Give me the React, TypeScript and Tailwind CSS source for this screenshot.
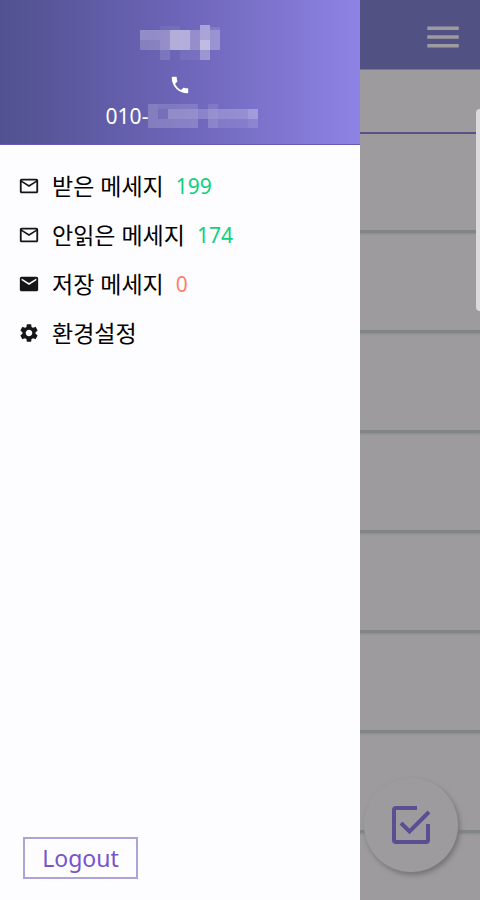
import React from "react";
import { MdMailOutline, MdEmail, MdSettings, MdPhone, MdMenu } from "react-icons/md";

interface MenuItem {
  label: string;
  icon: React.ReactNode;
  count?: number;
  countClass?: string;
}

const menuItems: MenuItem[] = [
  { label: "받은 메세지", icon: <MdMailOutline />, count: 199, countClass: "text-[#10d080]" },
  { label: "안읽은 메세지", icon: <MdMailOutline />, count: 174, countClass: "text-[#10d080]" },
  { label: "저장 메세지", icon: <MdEmail />, count: 0, countClass: "text-[#fa8268]" },
  { label: "환경설정", icon: <MdSettings /> },
];

const rows = [1, 2, 3, 4, 5, 6, 7];

// [x, y, width, height, opacity]
const nameBlocks = [
  [0, 5, 20, 10, 0.28],
  [0, 15, 20, 10, 0.2],
  [20, 1, 20, 4, 0.06],
  [20, 5, 10, 20, 0.28],
  [30, 5, 20, 20, 0.48],
  [50, 5, 10, 20, 0.26],
  [60, 0, 10, 15, 0.4],
  [60, 15, 10, 10, 0.55],
  [60, 25, 10, 10, 0.3],
  [70, 2, 10, 3, 0.1],
  [70, 5, 10, 20, 0.28],
  [20, 25, 10, 10, 0.12],
  [40, 25, 20, 10, 0.06],
];

const phoneBlocks = [
  [0, 0, 10, 24, 0.18],
  [10, 0, 10, 5, 0.14],
  [10, 5, 10, 10, 0.08],
  [10, 15, 10, 9, 0.18],
  [20, 0, 30, 5, 0.14],
  [20, 5, 30, 10, 0.26],
  [20, 15, 30, 9, 0.18],
  [50, 5, 10, 10, 0.18],
  [60, 0, 10, 5, 0.1],
  [60, 5, 10, 10, 0.26],
  [60, 15, 10, 9, 0.18],
  [70, 5, 30, 10, 0.22],
  [70, 15, 30, 9, 0.1],
  [100, 5, 10, 10, 0.3],
  [100, 15, 10, 9, 0.14],
];

const Mosaic: React.FC<{ blocks: number[][]; width: number; height: number }> = ({
  blocks,
  width,
  height,
}) => (
  <svg aria-hidden="true" width={width} height={height}>
    {blocks.map(([x, y, w, h, opacity], index) => (
      <rect key={index} x={x} y={y} width={w} height={h} fill="#fff" fillOpacity={opacity} />
    ))}
  </svg>
);

const Drawer = () => (
  <aside className="absolute inset-y-0 left-0 flex w-3/4 flex-col bg-[#fdfcff]">
    <div className="flex h-[145px] flex-col items-center border-b border-[#6559b4] bg-linear-to-r from-[#515190] via-[#6d65b8] to-[#8e83e4] pt-[25px] text-white">
      <Mosaic blocks={nameBlocks} width={80} height={35} />
      <MdPhone className="mt-3.5 size-[22px]" />
      <div className="mt-1.5 flex items-center pl-1">
        <span className="text-[21px] leading-7">010-</span>
        <Mosaic blocks={phoneBlocks} width={110} height={24} />
      </div>
    </div>

    <nav className="flex flex-col pt-4">
      {menuItems.map((item) => (
        <a key={item.label} href="#" className="flex h-[49px] items-center pl-[18px]">
          <span className="text-[22px] text-[#151517]">{item.icon}</span>
          <span className="ml-3 text-[23px] leading-8 text-black">{item.label}</span>
          {item.count !== undefined && (
            <span className={`ml-3 text-[21px] leading-8 ${item.countClass}`}>{item.count}</span>
          )}
        </a>
      ))}
    </nav>

    <button
      type="button"
      className="mt-auto mb-[21px] ml-[23px] h-[42px] w-[115px] border-2 border-[#aea3d6] text-[23px] leading-8 text-[#7654cc]"
    >
      Logout
    </button>
  </aside>
);

export default function App() {
  return (
    <div className="relative flex min-h-screen flex-col overflow-hidden bg-[#9d9b9d] font-['Noto_Sans','Noto_Sans_CJK_KR',sans-serif]">
      <header className="flex h-[70px] items-center justify-end border-b border-[#77788a] bg-[#525183] pr-4">
        <button type="button" aria-label="메뉴" className="mt-1 text-[#9d9b9f]">
          <MdMenu className="size-[42px]" />
        </button>
      </header>
      <div className="h-16 border-b-2 border-[#584f86]" />
      <ul className="-mt-px">
        {rows.map((row) => (
          <li key={row} className="h-[100px] border-b-3 border-[#828586] shadow-[0_1px_2px_#8a8c8c]" />
        ))}
      </ul>

      <button
        type="button"
        aria-label="선택"
        className="absolute right-[22px] bottom-7 flex size-[94px] items-center justify-center rounded-full bg-[#9d9b9d] shadow-[2px_3px_5px_#757575]"
      >
        <svg viewBox="0 0 40 40" className="size-10" fill="none" stroke="#5a4f90" strokeWidth="4">
          <path d="M26 3H5Q3 3 3 5V35Q3 37 5 37H35Q37 37 37 35V19" />
          <path d="M10 18L18.500 26.500L38 7" />
        </svg>
      </button>

      {/* edge panel handle */}
      <div className="absolute top-[109px] right-0 h-[202px] w-1 rounded-l bg-[#dcdadc]" />

      <Drawer />
    </div>
  );
}
